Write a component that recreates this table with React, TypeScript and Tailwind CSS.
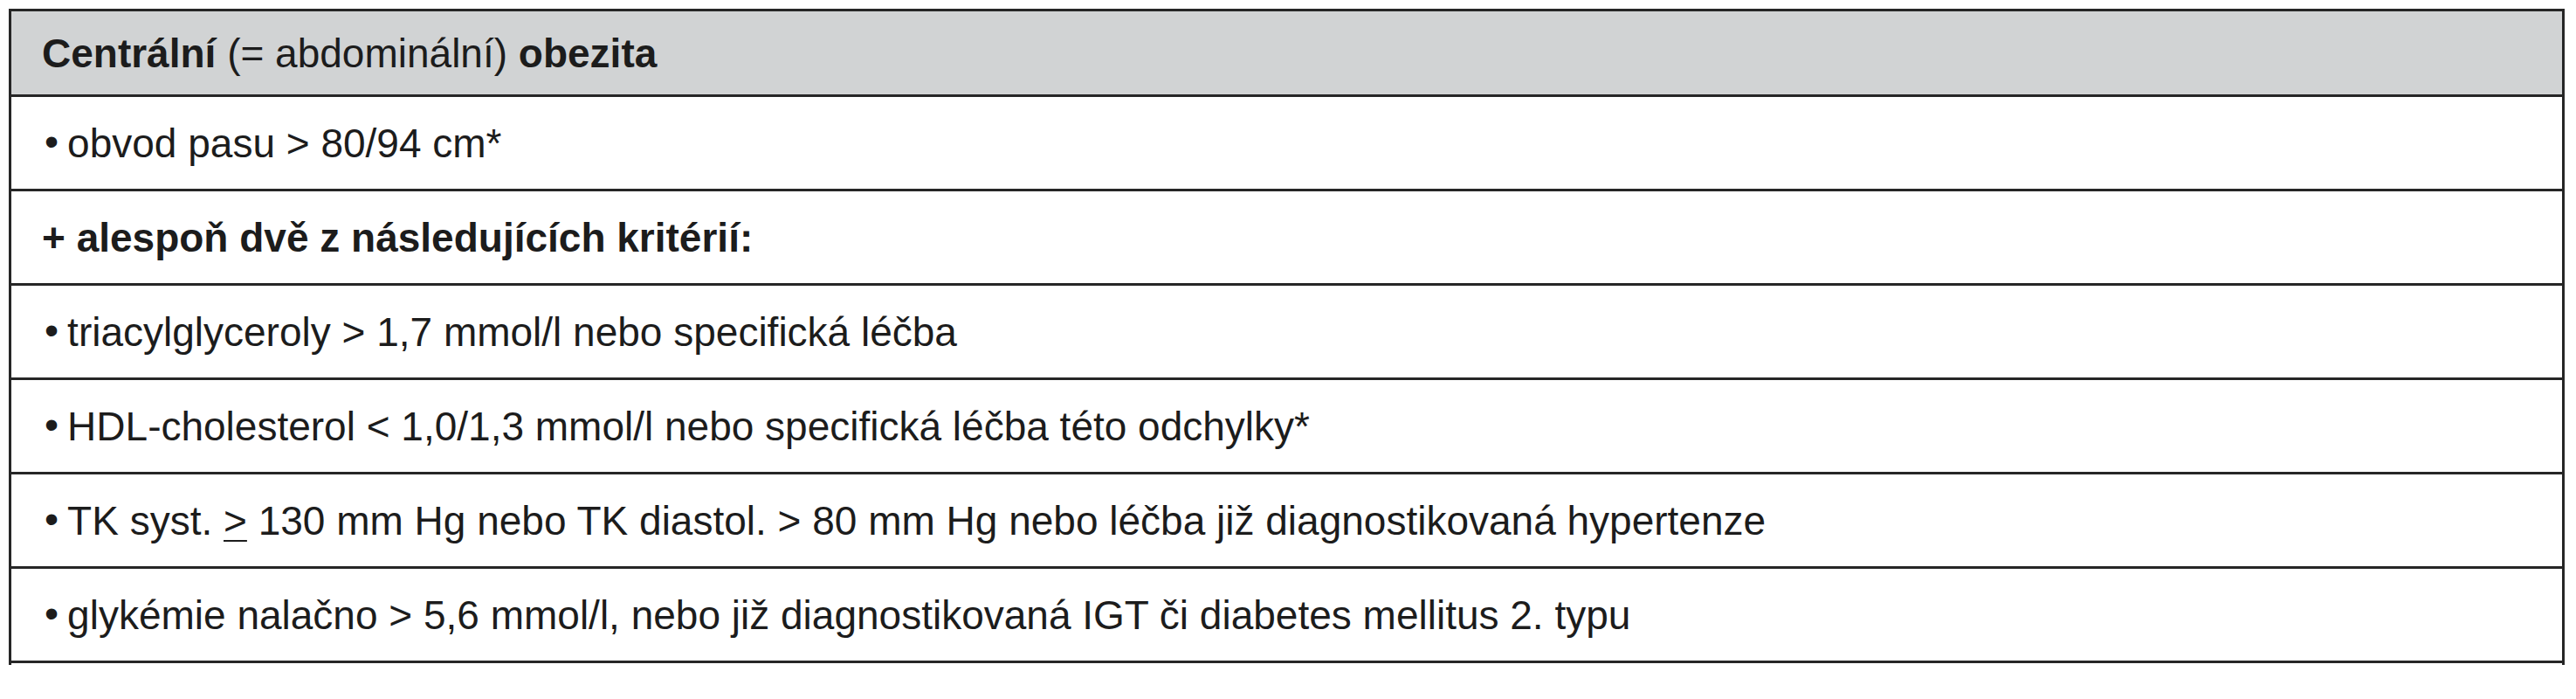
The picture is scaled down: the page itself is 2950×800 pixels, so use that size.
import React from "react";

const items: React.ReactNode[] = [
  <>obvod pasu &gt; 80/94 cm*</>,
  <>triacylglyceroly &gt; 1,7 mmol/l nebo specifická léčba</>,
  <>HDL-cholesterol &lt; 1,0/1,3 mmol/l nebo specifická léčba této odchylky*</>,
  <>
    TK syst. <span className="underline decoration-2 underline-offset-[6px]">&gt;</span> 130 mm Hg nebo TK diastol. &gt; 80 mm Hg
    nebo léčba již diagnostikovaná hypertenze
  </>,
  <>glykémie nalačno &gt; 5,6 mmol/l, nebo již diagnostikovaná IGT či diabetes mellitus 2. typu</>,
];

function Row({ children }: { children: React.ReactNode }) {
  return (
    <div className="h-[108px] border-b-[3px] border-[#262626] flex items-center pl-[38px]">
      <span className="mr-[10px] -mt-[4px]">•</span>
      <span>{children}</span>
    </div>
  );
}

export default function App() {
  return (
    <div className="min-h-screen bg-white pt-[10px] pl-[10px]">
      <div
        className="w-[2927px] border-x-[3px] border-t-[3px] border-[#262626] text-[46px] text-[#1c1c1c] leading-none"
        style={{ fontFamily: '"Liberation Sans", Arial, sans-serif' }}
      >
        <div className="h-[98px] bg-[#d1d3d4] border-b-[3px] border-[#262626] flex items-center pl-[35px]">
          <span>
            <b>Centrální</b> (= abdominální) <b>obezita</b>
          </span>
        </div>
        <Row>{items[0]}</Row>
        <div className="h-[108px] border-b-[3px] border-[#262626] flex items-center pl-[35px] font-bold">
          + alespoň dvě z následujících kritérií:
        </div>
        {items.slice(1).map((item, i) => (
          <Row key={i}>{item}</Row>
        ))}
        <div className="h-[2px]" />
      </div>
    </div>
  );
}
